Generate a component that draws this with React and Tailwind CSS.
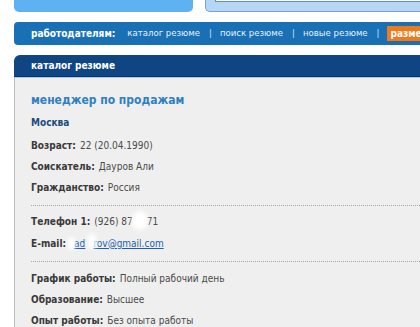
import React from "react";

const font = { fontFamily: "'DejaVu Sans Condensed', Tahoma, sans-serif" };

function Row({ label, children, className = "" }) {
  return (
    <div className={"h-[21px] flex items-center text-[10px] " + className}>
      <span className="font-bold text-[#3a3a3a] mr-1">{label}</span>
      <span className="text-[#4a4a4a]">{children}</span>
    </div>
  );
}

function Blot({ className }) {
  return <span className={"absolute rounded-full bg-white blur-[2px] " + className} />;
}

export default function App() {
  return (
    <div className="w-[420px] h-[327px] overflow-hidden bg-white" style={font}>
      {/* top strip */}
      <div className="flex h-[12px]">
        <div className="ml-[14px] w-[179px] bg-[#5eb2f1] rounded-b-[5px]" />
        <div className="ml-[12px] flex-1 bg-[#b7d5f5] border-l border-b border-[#6fa4dc] rounded-bl-[5px]">
          <div className="ml-[9px] h-[2px] border-b border-l border-[#5f8fc4] bg-white" />
        </div>
      </div>

      {/* employers nav */}
      <div className="mt-[10px] ml-[14px] h-[23px] bg-[#1a70b4] rounded-l-[4px] flex items-center text-[9.5px] text-white whitespace-nowrap overflow-hidden">
        <span className="ml-[17px] font-bold text-[10px]">работодателям:</span>
        <span className="ml-[12px] text-[#e6f0fa]">каталог резюме</span>
        <span className="ml-[9px] mr-[8px] text-[#cfe2f3]">|</span>
        <span className="text-[#e6f0fa]">поиск резюме</span>
        <span className="ml-[9px] mr-[8px] text-[#cfe2f3]">|</span>
        <span className="text-[#e6f0fa]">новые резюме</span>
        <span className="ml-[9px] mr-[7px] text-[#cfe2f3]">|</span>
        <span className="bg-[#f07a1a] font-bold text-[10px] pl-[4px] pr-[6px] h-[15px] flex items-center">разместить</span>
      </div>

      {/* panel */}
      <div className="mt-[10px] ml-[14px]">
        <div className="h-[22px] bg-[#0f4583] rounded-tl-[6px] flex items-center border-b border-[#0a3466]">
          <span className="ml-[17px] text-white font-bold text-[10px]">каталог резюме</span>
        </div>
        <div className="h-[1px] bg-[#a9cbe9]" />
        <div className="bg-[#efefef] border-l border-[#bdbdbd] pl-[16px] pt-[11px] h-[260px]">
          <div className="h-[22px] flex items-center text-[12px] font-bold text-[#2f80c0]">
            менеджер по продажам
          </div>
          <div className="h-[22px] flex items-center text-[10px] font-bold text-[#1b4b80]">
            Москва
          </div>
          <Row label="Возраст:" className="mt-[2px]">22 (20.04.1990)</Row>
          <Row label="Соискатель:">Дауров Али</Row>
          <Row label="Гражданство:">Россия</Row>

          <div className="mt-[7px] border-t border-dotted border-[#a8a8a8]" />

          <div className="mt-[4px] h-[22px] flex items-center text-[10px]">
            <span className="font-bold text-[#3a3a3a] mr-1">Телефон 1:</span>
            <span className="relative text-[#4a4a4a]">
              (926) 87<span className="inline-block w-[14px]" />71
              <Blot className="left-[38px] top-[-3px] w-[16px] h-[19px]" />
            </span>
          </div>
          <div className="h-[22px] flex items-center text-[10px]">
            <span className="font-bold text-[#3a3a3a] mr-[8px]">E-mail:</span>
            <span className="relative">
              <a className="text-[#1c5fb0] underline">
                ad<span className="inline-block w-[8px]" />rov@gmail.com
              </a>
              <Blot className="left-[-6px] top-[1px] w-[7px] h-[13px]" />
              <Blot className="left-[14px] top-[-2px] w-[8px] h-[15px]" />
            </span>
          </div>

          <div className="mt-[7px] border-t border-dotted border-[#a8a8a8]" />

          <Row label="График работы:" className="mt-[5px] h-[22px]">Полный рабочий день</Row>
          <Row label="Образование:">Высшее</Row>
          <Row label="Опыт работы:">Без опыта работы</Row>
        </div>
      </div>
    </div>
  );
}
